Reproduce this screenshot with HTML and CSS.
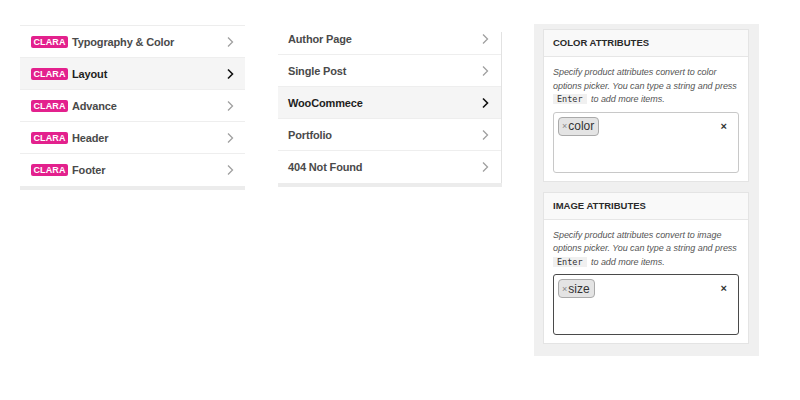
FILE: index.html
```html
<!DOCTYPE html>
<html>
<head>
<meta charset="utf-8">
<link rel="stylesheet" href="styles.css">
</head>
<body>
<div class="page">
  <div class="menu menu-one">
    <div class="row"><span class="badge">CLARA</span><span class="label">Typography &amp; Color</span><svg class="chev" viewBox="0 0 8 12"><path d="M2 1.5 L6.5 6 L2 10.5"/></svg></div>
    <div class="row active"><span class="badge">CLARA</span><span class="label">Layout</span><svg class="chev" viewBox="0 0 8 12"><path d="M2 1.5 L6.5 6 L2 10.5"/></svg></div>
    <div class="row"><span class="badge">CLARA</span><span class="label">Advance</span><svg class="chev" viewBox="0 0 8 12"><path d="M2 1.5 L6.5 6 L2 10.5"/></svg></div>
    <div class="row"><span class="badge">CLARA</span><span class="label">Header</span><svg class="chev" viewBox="0 0 8 12"><path d="M2 1.5 L6.5 6 L2 10.5"/></svg></div>
    <div class="row"><span class="badge">CLARA</span><span class="label">Footer</span><svg class="chev" viewBox="0 0 8 12"><path d="M2 1.5 L6.5 6 L2 10.5"/></svg></div>
  </div>

  <div class="menu menu-two">
    <div class="row"><span class="label">Author Page</span><svg class="chev" viewBox="0 0 8 12"><path d="M2 1.5 L6.5 6 L2 10.5"/></svg></div>
    <div class="row"><span class="label">Single Post</span><svg class="chev" viewBox="0 0 8 12"><path d="M2 1.5 L6.5 6 L2 10.5"/></svg></div>
    <div class="row active"><span class="label">WooCommece</span><svg class="chev" viewBox="0 0 8 12"><path d="M2 1.5 L6.5 6 L2 10.5"/></svg></div>
    <div class="row"><span class="label">Portfolio</span><svg class="chev" viewBox="0 0 8 12"><path d="M2 1.5 L6.5 6 L2 10.5"/></svg></div>
    <div class="row"><span class="label">404 Not Found</span><svg class="chev" viewBox="0 0 8 12"><path d="M2 1.5 L6.5 6 L2 10.5"/></svg></div>
  </div>

  <div class="settings">
    <div class="card">
      <div class="card-head">COLOR ATTRIBUTES</div>
      <div class="card-body">
        <p class="desc">Specify product attributes convert to color options picker. You can type a string and press <code>Enter</code> to add more items.</p>
        <div class="tagbox">
          <span class="tag"><span class="tag-x">×</span>color</span>
          <span class="clear">×</span>
        </div>
      </div>
    </div>
    <div class="card">
      <div class="card-head">IMAGE ATTRIBUTES</div>
      <div class="card-body">
        <p class="desc">Specify product attributes convert to image options picker. You can type a string and press <code>Enter</code> to add more items.</p>
        <div class="tagbox focused">
          <span class="tag"><span class="tag-x">×</span>size</span>
          <span class="clear">×</span>
        </div>
      </div>
    </div>
  </div>
</div>
</body>
</html>
```

FILE: styles.css
```css
html, body {
  margin: 0;
  padding: 0;
  background: #ffffff;
  font-family: "Liberation Sans", Arial, sans-serif;
}

.page {
  display: flex;
  align-items: flex-start;
  padding-left: 20px;
}

.menu {
  display: flex;
  flex-direction: column;
  border-bottom: 4px solid #ececec;
  position: relative;
}

.menu-one {
  width: 225px;
  margin-top: 25px;
  border-top: 1px solid #ededed;
}

.menu-two {
  width: 224px;
  margin-top: 23px;
  margin-left: 33px;
}

.menu-two::after {
  content: "";
  position: absolute;
  right: 0;
  top: 9px;
  bottom: 0;
  width: 1px;
  background: #e2e2e2;
}

.row {
  height: 31px;
  display: flex;
  align-items: center;
  border-bottom: 1px solid #eeeeee;
  padding: 0 11px 0 11px;
  color: #4a4a4a;
}

.row:last-child {
  border-bottom: none;
  height: 32px;
}

.menu-two .row {
  padding-left: 10px;
  padding-right: 13px;
}

.row.active {
  background: #f5f5f5;
  color: #1e1e1e;
}

.badge {
  display: inline-block;
  background: #e3218d;
  color: #ffffff;
  font-size: 9px;
  font-weight: bold;
  line-height: 12px;
  height: 12px;
  width: 37px;
  text-align: center;
  border-radius: 2px;
  letter-spacing: 0.1px;
  margin-right: 4px;
}

.label {
  flex: 1;
  font-size: 11px;
  font-weight: bold;
  letter-spacing: -0.15px;
}

.chev {
  width: 8px;
  height: 12px;
  fill: none;
  stroke: #a0a0a0;
  stroke-width: 1.3;
}

.row.active .chev {
  stroke: #111111;
  stroke-width: 1.6;
}

.settings {
  margin-left: 32px;
  margin-top: 24px;
  width: 225px;
  background: #f0f0f0;
  padding: 5px 10px 12px 9px;
  box-sizing: border-box;
  display: flex;
  flex-direction: column;
  gap: 10px;
}

.card {
  background: #ffffff;
  border: 1px solid #e4e4e4;
}

.card-head {
  height: 26px;
  line-height: 26px;
  padding-left: 9px;
  background: #f9f9f9;
  border-bottom: 1px solid #e6e6e6;
  font-size: 9.5px;
  font-weight: bold;
  color: #2a2a2a;
}

.card-body {
  padding: 9px 9px 8px 9px;
}

.desc {
  margin: 0 0 5px 0;
  font-size: 9px;
  line-height: 13.5px;
  font-style: italic;
  color: #555555;
  letter-spacing: -0.05px;
}

.desc code {
  font-family: "DejaVu Sans Mono", "Liberation Mono", monospace;
  font-style: normal;
  font-size: 8.5px;
  line-height: 11px;
  background: #f0f0f0;
  color: #333333;
  padding: 0 4px;
  margin-right: 2px;
  letter-spacing: 0;
}

.tagbox {
  height: 61px;
  box-sizing: border-box;
  border: 1px solid #c8c8c8;
  border-radius: 3px;
  display: flex;
  align-items: flex-start;
  justify-content: space-between;
  padding: 4px 11px 0 4px;
}

.tagbox.focused {
  border-color: #4a4a4a;
}

.tag {
  display: inline-flex;
  align-items: center;
  height: 19px;
  box-sizing: border-box;
  background: #e4e4e4;
  border: 1px solid #aaaaaa;
  border-radius: 4px;
  padding: 0 4px 0 3px;
  font-size: 12px;
  color: #333333;
}

.tag-x {
  color: #888888;
  font-size: 9px;
  margin-right: 1px;
}

.clear {
  font-size: 11px;
  font-weight: bold;
  color: #333333;
  line-height: 19px;
}
```
